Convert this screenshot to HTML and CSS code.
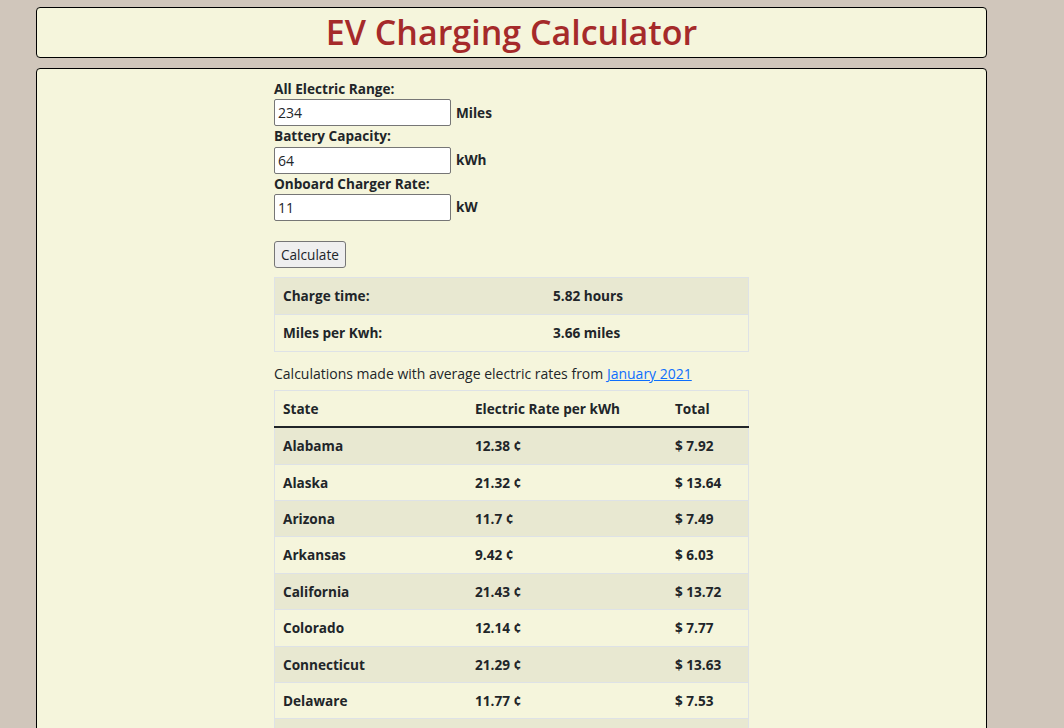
FILE: index.html
```html
<!DOCTYPE html>
<html lang="en">
<head>
    <title>EV Charging Calculator</title>
    <link rel="stylesheet" href="styles.css">
</head>
<body>
    <div class="page">
        <header class="panel header">
            <h1>EV Charging Calculator</h1>
        </header>

        <main class="panel main">
            <div class="column">
                <form id="evForm">
                    <div class="form-group">
                        <label for="range">All Electric Range:</label>
                        <div class="field">
                            <input type="text" id="range" value="234">
                            <span class="unit">Miles</span>
                        </div>
                    </div>
                    <div class="form-group">
                        <label for="battery">Battery Capacity:</label>
                        <div class="field">
                            <input type="text" id="battery" value="64">
                            <span class="unit">kWh</span>
                        </div>
                    </div>
                    <div class="form-group">
                        <label for="charger">Onboard Charger Rate:</label>
                        <div class="field">
                            <input type="text" id="charger" value="11">
                            <span class="unit">kW</span>
                        </div>
                    </div>
                    <button type="submit" class="button">Calculate</button>
                </form>

                <table class="table summary">
                    <tbody>
                        <tr>
                            <td class="key">Charge time:</td>
                            <td id="chargeTime">5.82 hours</td>
                        </tr>
                        <tr>
                            <td class="key">Miles per Kwh:</td>
                            <td id="milesPerKwh">3.66 miles</td>
                        </tr>
                    </tbody>
                </table>

                <p class="note">Calculations made with average electric rates from <a href="#">January 2021</a></p>

                <table class="table rates">
                    <thead>
                        <tr>
                            <th class="col-state">State</th>
                            <th class="col-rate">Electric Rate per kWh</th>
                            <th>Total</th>
                        </tr>
                    </thead>
                    <tbody id="rateRows"></tbody>
                </table>
            </div>
        </main>
    </div>

    <script>
        const rates = [
            ['Alabama', 12.38], ['Alaska', 21.32], ['Arizona', 11.7], ['Arkansas', 9.42],
            ['California', 21.43], ['Colorado', 12.14], ['Connecticut', 21.29], ['Delaware', 11.77],
            ['District of Columbia', 13.21], ['Florida', 11.43], ['Georgia', 12.26]
        ];

        function render() {
            const range = parseFloat(document.getElementById("range").value);
            const battery = parseFloat(document.getElementById("battery").value);
            const charger = parseFloat(document.getElementById("charger").value);

            document.getElementById("chargeTime").innerText = (battery / charger).toFixed(2) + " hours";
            document.getElementById("milesPerKwh").innerText = (range / battery).toFixed(2) + " miles";

            let rows = "";
            for (const [state, rate] of rates) {
                const total = (rate * battery / 100).toFixed(2);
                rows += `<tr><td>${state}</td><td>${rate} &cent;</td><td>$ ${total}</td></tr>`;
            }
            document.getElementById("rateRows").innerHTML = rows;
        }

        document.getElementById("evForm").addEventListener("submit", function(event) {
            event.preventDefault();
            render();
        });

        render();
    </script>
</body>
</html>
```

FILE: styles.css
```css
body {
    margin: 0;
    padding: 0;
    background-color: #d0c6bb;
    color: #212529;
    font-family: "Open Sans", "Noto Sans", sans-serif;
    font-size: 13.6px;
    line-height: 1.5;
}

.page {
    width: 951px;
    padding: 7px 0 0 36px;
    display: flex;
    flex-direction: column;
    gap: 10px;
}

.panel {
    background-color: #f5f5dc;
    border: 1px solid #000;
    border-radius: 4px;
}

.header h1 {
    margin: 0;
    padding: 1px 0 2px;
    text-align: center;
    color: #a52a2a;
    font-size: 34px;
    font-weight: 600;
    line-height: 46px;
}

.main {
    padding: 10px 0 0;
    height: 700px;
}

.column {
    width: 475px;
    margin: 0 auto;
}

.form-group label {
    display: block;
    font-weight: 700;
}

.field {
    display: flex;
    align-items: center;
    gap: 5px;
}

.field input {
    width: 177px;
    height: 27px;
    box-sizing: border-box;
    padding: 1px 3px;
    font-family: inherit;
    font-size: 14px;
    color: #212529;
    background-color: #fff;
    border: 1px solid #767676;
    border-radius: 2px;
}

.unit {
    font-weight: 700;
}

.button {
    margin-top: 20px;
    height: 27px;
    padding: 0 6px;
    font-family: inherit;
    font-size: 13.6px;
    color: #212529;
    background-color: #efefef;
    border: 1px solid #767676;
    border-radius: 3px;
}

.table {
    width: 475px;
    border-collapse: collapse;
    border: 1px solid #dee2e6;
}

.table td,
.table th {
    padding: 8px;
    line-height: 19.4px;
    text-align: left;
    font-weight: 700;
    border-bottom: 1px solid #dee2e6;
}

.table tbody tr:nth-child(odd) {
    background-color: #e8e8d1;
}

.summary {
    margin-top: 9px;
}

.summary td {
    line-height: 20px;
}

.summary .key {
    width: 254px;
}

.note {
    margin: 11px 0 6px;
    font-size: 14px;
}

.note a {
    color: #0d6efd;
}

.rates thead th {
    line-height: 19px;
    border-bottom: 2px solid #212529;
}

.col-state {
    width: 176px;
}

.col-rate {
    width: 184px;
}
```
